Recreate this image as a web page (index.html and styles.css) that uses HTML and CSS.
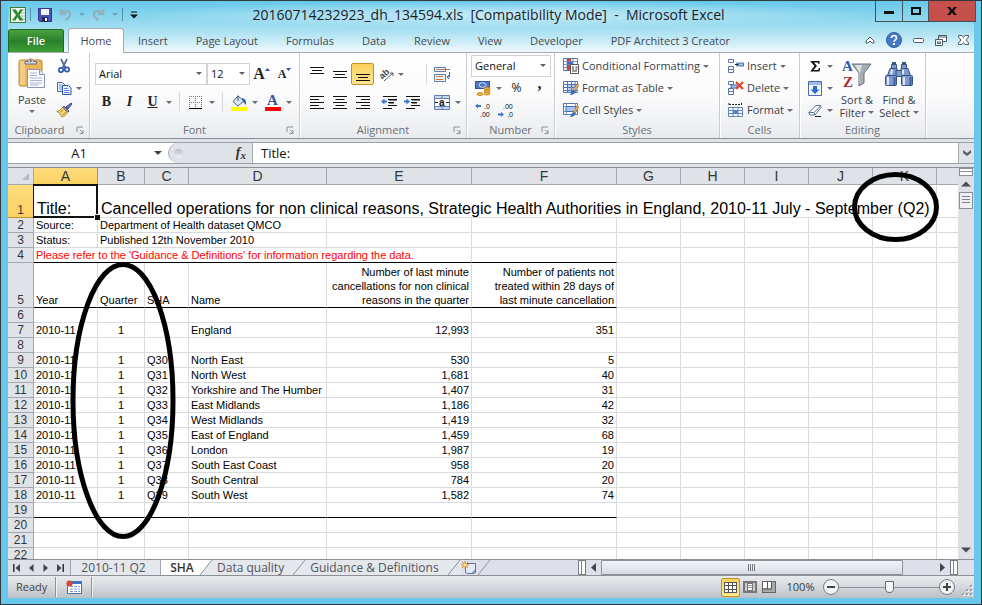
FILE: index.html
```html
<!DOCTYPE html>
<html lang="en">
<head>
<meta charset="utf-8">
<title>20160714232923_dh_134594.xls - Microsoft Excel</title>
<link rel="stylesheet" href="styles.css">
</head>
<body>
<div class="window">
  <header class="titlebar">
    <div class="quick">
      <svg class="ico" width="16" height="16" viewBox="0 0 16 16"><rect x=".5" y=".5" width="15" height="15" fill="#f4faf2" stroke="#3c7d3c"/><path d="M11 3h4M11 6h4M11 9h4M11 12h4" stroke="#8fb98f"/><path d="M2 2.5h4l2 3.5 2-3.5h3L9.500 8l4 5.500h-4L7.500 10l-2 3.500H2L6 8z" fill="#2e8b33"/></svg>
      <span class="qsep"></span>
      <button class="plain" aria-label="Save"><svg width="14" height="14" viewBox="0 0 14 14"><path d="M.5.5h13v13h-12l-1-1z" fill="#4a50b8" stroke="#33368c"/><rect x="3" y="1" width="8" height="6" fill="#eef4ff"/><rect x="4" y="9" width="6" height="5" fill="#222a55"/><rect x="7" y="10" width="2" height="3" fill="#fff"/></svg></button>
      <button class="plain" aria-label="Undo"><svg width="13" height="13" viewBox="0 0 13 13"><path d="M2 1v5h5M2.500 5.500C5 2 11 2 11 6.500 11 9 9 10.500 6.500 12" fill="none" stroke="#93b1c1" stroke-width="2.500"/></svg></button>
      <i class="caret dim"></i>
      <button class="plain" aria-label="Redo"><svg width="13" height="13" viewBox="0 0 13 13"><path d="M11 1v5H6M10.500 5.500C8 2 2 2 2 6.500 2 9 4 10.500 6.500 12" fill="none" stroke="#93b1c1" stroke-width="2.500"/></svg></button>
      <i class="caret dim"></i>
      <span class="qsep"></span>
      <svg width="8" height="8" viewBox="0 0 8 8"><path d="M1 1h6" stroke="#111"/><path d="M0 3.500h8L4 7.500z" fill="#111"/></svg>
    </div>
    <h1>20160714232923_dh_134594.xls&nbsp; [Compatibility Mode]&nbsp; -&nbsp; Microsoft Excel</h1>
    <div class="winbtns">
      <button class="wmin" aria-label="Minimize"><svg width="10" height="10"><rect y="5" width="10" height="3" fill="#111"/></svg></button>
      <button class="wmax" aria-label="Maximize"><svg width="10" height="10"><rect x="1" y="2" width="8" height="6" fill="none" stroke="#111" stroke-width="2"/></svg></button>
      <button class="wclose" aria-label="Close"><svg width="10" height="8" viewBox="0 0 10 8"><path d="M0 0h3l2 2.500L7 0h3L6.700 4 10 8H7L5 5.500 3 8H0l3.300-4z" fill="#111"/></svg></button>
    </div>
  </header>

  <nav class="tabs">
    <button class="file">File</button>
    <button class="tab on">Home</button>
    <button class="tab">Insert</button>
    <button class="tab">Page Layout</button>
    <button class="tab">Formulas</button>
    <button class="tab">Data</button>
    <button class="tab">Review</button>
    <button class="tab">View</button>
    <button class="tab">Developer</button>
    <button class="tab">PDF Architect 3 Creator</button>
    <div class="docbtns">
      <button class="plain" aria-label="Minimize ribbon"><svg width="10" height="8" viewBox="0 0 10 8"><path d="M1 5l4-4 4 4v2H7L5 5 3 7H1z" fill="#fff" stroke="#4a5a66"/></svg></button>
      <button class="plain" aria-label="Help"><svg width="16" height="16" viewBox="0 0 16 16"><circle cx="8" cy="8" r="7.500" fill="#4477c4" stroke="#2f5ca6"/><path d="M5.500 6c0-3.300 5-3.300 5 0 0 1.800-2.500 1.800-2.500 3.800" fill="none" stroke="#fff" stroke-width="1.600"/><rect x="7" y="11" width="2" height="2" fill="#fff"/></svg></button>
      <button class="plain" aria-label="Minimize workbook"><svg width="11" height="5"><rect x=".5" y=".5" width="10" height="4" rx="1" fill="#fff" stroke="#4a5a66"/></svg></button>
      <button class="plain" aria-label="Restore workbook"><svg width="12" height="11" viewBox="0 0 12 11"><path d="M3.500.5h8v6h-8z" fill="#fff" stroke="#4a5a66"/><path d="M3.500 2h8" stroke="#4a5a66"/><path d="M.5 4.500h7v6h-7z" fill="#fff" stroke="#4a5a66"/><path d="M2.500 7h3v1.500h-3z" fill="#fff" stroke="#4a5a66"/></svg></button>
      <button class="plain" aria-label="Close workbook"><svg width="11" height="10" viewBox="0 0 11 10"><path d="M.5.5H4L5.500 2.500 7 .5h3.500V2L8 5l2.500 3v1.500H7L5.500 7.500 4 9.500H.5V8L3 5 .5 2z" fill="#fff" stroke="#4a5a66"/></svg></button>
    </div>
  </nav>

  <section class="ribbon">
    <div class="group g-clip">
      <div class="body">
        <button class="big paste"><svg width="28" height="31" viewBox="0 0 28 31"><rect x="1" y="2" width="23" height="26" rx="2" fill="#e9b55b" stroke="#c48a2e"/><path d="M2 3h5v24H2z" fill="#f3cd85"/><path d="M7 6V3.500h3C10 .2 15.500.2 15.500 3.500h3V6z" fill="#d3d7dd" stroke="#6d737b"/><circle cx="12.700" cy="3" r="1" fill="#555"/><path d="M9.500 11.500h12l5 5v13h-17z" fill="#fdfdff" stroke="#8694b5"/><path d="M21.500 11.500v5h5" fill="#dfe6f3" stroke="#8694b5"/><path d="M12 15h7M12 17.500h7M12 20h12M12 22.500h12M12 25h12M12 27h9" stroke="#a4b2d2"/></svg><span>Paste</span><i class="caret"></i></button>
        <div class="stack">
          <button class="row" aria-label="Cut"><svg width="16" height="16" viewBox="0 0 16 16"><path d="M5 1l4.500 9M11 1L6.500 10" stroke="#52698a" stroke-width="1.700"/><circle cx="5" cy="12" r="2.200" fill="none" stroke="#2d56b0" stroke-width="1.700"/><circle cx="11" cy="11.500" r="2.200" fill="none" stroke="#2d56b0" stroke-width="1.700"/></svg></button>
          <button class="row" aria-label="Copy"><svg width="16" height="16" viewBox="0 0 16 16"><path d="M1.500 2.500h5l2 2v7h-7z" fill="#eaf1fd" stroke="#3d66b5"/><path d="M3 5h3M3 7h4M3 9h4" stroke="#6f93d6"/><path d="M6.500 5.500h6l2.500 2.500v6.500H6.500z" fill="#eaf1fd" stroke="#2c56aa"/><path d="M8 8.500h4M8 10.500h5.500M8 12.500h5.500" stroke="#5c84cf"/></svg><i class="caret"></i></button>
          <button class="row" aria-label="Format Painter"><svg width="17" height="16" viewBox="0 0 17 16"><path d="M15 1l1 1-4 5-2-2z" fill="#6875b8" stroke="#3f4a8a"/><path d="M8 4l5 5-1.500 1.500-5-5z" fill="#8e84ad" stroke="#5e5680"/><path d="M6.500 5.500l5 5C10 13 8 14.500 6 15 4.500 12.500 3 10.500.8 9.500 3 9 5 7.500 6.500 5.500z" fill="#f1d678" stroke="#a8832c"/><path d="M7 13l2.500-3M4 10.500l3-2.500" stroke="#b48d30"/></svg></button>
        </div>
      </div>
      <div class="label">Clipboard<svg class="launch" width="8" height="8"><path d="M1 6V1h6M4 4l3 3M7 4v3.500H3.500" fill="none" stroke="#8b9199"/></svg></div>
    </div>

    <div class="group g-font">
      <div class="body two">
        <div class="line">
          <span class="combo fname"><select aria-label="Font"><option>Arial</option></select></span>
          <span class="combo fsize"><select aria-label="Font size"><option>12</option></select></span>
          <button class="cell serif grow" aria-label="Grow font"><b>A</b><svg width="5" height="3"><path d="M0 3L2.500 0 5 3z" fill="#2b55b5"/></svg></button>
          <button class="cell serif shrink" aria-label="Shrink font"><b>A</b><svg width="5" height="3"><path d="M0 0L2.500 3 5 0z" fill="#2b55b5"/></svg></button>
        </div>
        <div class="line">
          <button class="cell serif"><b>B</b></button>
          <button class="cell serif"><b><em>I</em></b></button>
          <button class="cell serif"><b><u>U</u></b></button>
          <i class="caret wide"></i><span class="vsep"></span>
          <button class="cell" aria-label="Borders"><svg width="13" height="13"><path d="M0 .5h13M0 6.500h13M.5 0v12M6.500 0v12M12.500 0v12" stroke="#777" stroke-dasharray="1 1"/><path d="M0 12.500h13" stroke="#000"/></svg></button>
          <i class="caret wide"></i><span class="vsep"></span>
          <button class="cell" aria-label="Fill color"><svg width="16" height="17" viewBox="0 0 16 17"><path d="M7 2l6 5-6 5-5-4.500z" fill="#dce6f5" stroke="#4a648c"/><path d="M7 7V1.500" stroke="#3a4f74"/><path d="M11 4c3 .5 4.500 2.500 4 7-1.500-1-2-3-3.500-4z" fill="#2d61b8"/><rect y="13" width="16" height="4" fill="#ff0"/></svg></button>
          <i class="caret wide"></i>
          <button class="cell fcolor serif" aria-label="Font color"><b>A</b></button>
          <i class="caret wide"></i>
        </div>
      </div>
      <div class="label">Font<svg class="launch" width="8" height="8"><path d="M1 6V1h6M4 4l3 3M7 4v3.500H3.500" fill="none" stroke="#8b9199"/></svg></div>
    </div>

    <div class="group g-align">
      <div class="body two">
        <div class="line">
          <button class="cell" aria-label="Top align"><svg width="14" height="14"><path d="M0 .5h14M2 3.500h10M0 6.500h14" stroke="#111"/></svg></button>
          <button class="cell" aria-label="Middle align"><svg width="14" height="14"><path d="M0 4.500h14M2 7.500h10M0 10.500h14" stroke="#111"/></svg></button>
          <button class="cell pressed" aria-label="Bottom align"><svg width="14" height="14"><path d="M0 7.500h14M2 10.500h10M0 13.500h14" stroke="#111"/></svg></button>
          <button class="cell orient" aria-label="Orientation"><svg width="17" height="16" viewBox="0 0 17 16"><text x="2" y="12" transform="rotate(-40 5 10)" font-family="Liberation Sans" font-size="9" font-weight="bold" fill="#444">ab</text><path d="M6 15L15 7M12 7h3v3" stroke="#555" fill="none"/></svg></button>
          <i class="caret wide"></i><span class="vsep far"></span>
          <button class="cell" aria-label="Wrap text"><svg width="16" height="15" viewBox="0 0 16 15"><path d="M.5.500h11v4H.5zM.5 7.500h11v7H.5z" fill="#eef3fb" stroke="#5f7dae"/><path d="M2 2.500h14" stroke="#c0764a"/><path d="M2 9.500h7M2 12.500h7" stroke="#c0764a"/><path d="M15.500 5v5H13M15 8l-2 2 2 2" fill="none" stroke="#3e6ab8"/></svg></button>
        </div>
        <div class="line">
          <button class="cell" aria-label="Align left"><svg width="14" height="13"><path d="M0 .5h14M0 3.500h9M0 6.500h14M0 9.500h9M0 12.500h14" stroke="#111"/></svg></button>
          <button class="cell" aria-label="Center"><svg width="14" height="13"><path d="M0 .5h14M2.500 3.500h9M0 6.500h14M2.500 9.500h9M0 12.500h14" stroke="#111"/></svg></button>
          <button class="cell" aria-label="Align right"><svg width="14" height="13"><path d="M0 .5h14M5 3.500h9M0 6.500h14M5 9.500h9M0 12.500h14" stroke="#111"/></svg></button>
          <button class="cell indent" aria-label="Decrease indent"><svg width="16" height="13" viewBox="0 0 16 13"><path d="M2 .5h14M7 3.500h9M7 6.500h6M7 9.500h9M2 12.500h9" stroke="#111"/><path d="M8 3h8v1.500H8zM8 6h5v1.500H8z" fill="#111"/><path d="M0 5.500L3.500 2.500v2H6v2H3.500v2z" fill="#3a73d0"/></svg></button>
          <button class="cell" aria-label="Increase indent"><svg width="16" height="13" viewBox="0 0 16 13"><path d="M2 .5h14M7 3.500h9M7 6.500h6M7 9.500h9M2 12.500h9" stroke="#111"/><path d="M8 3h8v1.500H8zM8 6h5v1.500H8z" fill="#111"/><path d="M6 5.500L2.500 2.500v2H0v2h2.500v2z" fill="#3a73d0"/></svg></button>
          <button class="cell merge" aria-label="Merge and center"><svg width="16" height="15" viewBox="0 0 16 15"><path d="M.5.500h15v14H.5z" fill="#c9d9f2" stroke="#5f7dae"/><path d="M0 3.500h16M0 11.500h16M8 0v3M8 12v3" stroke="#5f7dae"/><rect x="1" y="4" width="14" height="7" fill="#fff"/><path d="M1 7.500h3M12 7.500h3" stroke="#222"/><text x="5" y="10.500" font-family="Liberation Sans" font-size="10" font-weight="bold" fill="#111">a</text></svg></button>
          <i class="caret wide"></i>
        </div>
      </div>
      <div class="label">Alignment<svg class="launch" width="8" height="8"><path d="M1 6V1h6M4 4l3 3M7 4v3.500H3.500" fill="none" stroke="#8b9199"/></svg></div>
    </div>

    <div class="group g-num">
      <div class="body stack">
        <span class="combo"><select aria-label="Number format"><option>General</option></select></span>
        <div class="line">
          <button class="cell" aria-label="Accounting format"><svg width="16" height="15" viewBox="0 0 16 15"><rect x=".5" y=".500" width="14" height="7" fill="#4e78c0" stroke="#2f5596"/><ellipse cx="7.500" cy="4" rx="3.500" ry="2.300" fill="none" stroke="#cfe0fa"/><g fill="#f0b93a" stroke="#a9701a" stroke-width=".7"><ellipse cx="12" cy="7.500" rx="3" ry="1.500"/><ellipse cx="12" cy="10" rx="3" ry="1.500"/><ellipse cx="12" cy="12.500" rx="3" ry="1.500"/><ellipse cx="5" cy="13" rx="3" ry="1.500"/></g></svg></button>
          <i class="caret wide"></i>
          <button class="cell pct">%</button>
          <button class="cell serif comma" aria-label="Comma style"><b>,</b></button>
        </div>
        <div class="line">
          <button class="cell" aria-label="Increase decimal"><svg width="16" height="16" viewBox="0 0 16 16"><path d="M0 4L3 1.500V3h3v2H3v1.500z" fill="#3a73d0"/><g font-family="Liberation Sans" font-size="7" fill="#111"><text x="9" y="7">.0</text><text x="5" y="15">.00</text></g></svg></button>
          <button class="cell" aria-label="Decrease decimal"><svg width="16" height="16" viewBox="0 0 16 16"><path d="M6 12.500L3 10v1.500H0v2h3V15z" fill="#3a73d0"/><g font-family="Liberation Sans" font-size="7" fill="#111"><text x="5" y="7">.00</text><text x="9" y="15">.0</text></g></svg></button>
        </div>
      </div>
      <div class="label">Number<svg class="launch" width="8" height="8"><path d="M1 6V1h6M4 4l3 3M7 4v3.500H3.500" fill="none" stroke="#8b9199"/></svg></div>
    </div>

    <div class="group g-style">
      <div class="body stack">
        <button class="row"><svg width="16" height="16" viewBox="0 0 16 16"><path d="M.5.500h14v12H.5z" fill="#fff" stroke="#5577ae"/><path d="M1 3.500h13M1 6.500h13M1 9.500h13M4 1v11M10 1v11" stroke="#7b98c6"/><rect x="4" y="1" width="4" height="2.500" fill="#d9412f"/><rect x="4" y="4" width="6" height="2.500" fill="#3c6cc4"/><rect x="4" y="7" width="3" height="5" fill="#d9412f"/><path d="M7.500 6.500h8v9h-8z" fill="#fff" stroke="#555"/><path d="M9 9h2M12.500 9h2M9 11h2M12.500 11h2M9 13h5" stroke="#333"/></svg><span>Conditional Formatting</span><i class="caret"></i></button>
        <button class="row"><svg width="16" height="16" viewBox="0 0 16 16"><path d="M.5 1.500h14v11H.5z" fill="#fff" stroke="#5577ae"/><path d="M4 4h11v8H4z" fill="#b9cff0"/><path d="M1 4.500h14M1 7.500h14M1 10.500h14M4.500 1v12M8.500 1v12M12 1v12" stroke="#4f75b6"/><path d="M14 4l2 1-4 6-2-1z" fill="#e7b765" stroke="#936520" stroke-width=".6"/><path d="M10 10l2.500 1.500C12 14 9 15.500 6.500 15c2-.8 2-3.500 3.500-5z" fill="#3268c6"/></svg><span>Format as Table</span><i class="caret"></i></button>
        <button class="row"><svg width="16" height="16" viewBox="0 0 16 16"><path d="M.5 1.500h14v11H.5z" fill="#fff" stroke="#5577ae"/><path d="M1 4.500h14M1 9.500h14M3.500 1v12M12.500 1v12" stroke="#7b98c6"/><path d="M3 4.500h10v5H3z" fill="#a9c8f3" stroke="#3d6dbb"/><path d="M14 4l2 1-4 6-2-1z" fill="#e7b765" stroke="#936520" stroke-width=".6"/><path d="M10 10l2.500 1.500C12 14 9 15.500 6.500 15c2-.8 2-3.500 3.500-5z" fill="#3268c6"/></svg><span>Cell Styles</span><i class="caret"></i></button>
      </div>
      <div class="label">Styles</div>
    </div>

    <div class="group g-cells">
      <div class="body stack">
        <button class="row"><svg width="16" height="15" viewBox="0 0 16 15"><path d="M.5.500h5v3h-5zM.5 7.500h5v3h-5zM.5 10.500h5v3h-5z" fill="#fff" stroke="#5a76a6"/><path d="M7 5.500h4M9 3.500v4" stroke="#222"/><path d="M10.500 4h5v3h-5z" fill="#a9c8f3" stroke="#3d6dbb"/></svg><span>Insert</span><i class="caret"></i></button>
        <button class="row"><svg width="16" height="15" viewBox="0 0 16 15"><path d="M.5.500h5v3h-5zM.5 7.500h5v3h-5zM.5 10.500h5v3h-5z" fill="#fff" stroke="#5a76a6"/><path d="M3 4h6v3H3z" fill="#a9c8f3" stroke="#3d6dbb"/><path d="M8 1l7 7M15 1L8 8" stroke="#e4472b" stroke-width="2.200"/></svg><span>Delete</span><i class="caret"></i></button>
        <button class="row"><svg width="16" height="16" viewBox="0 0 16 16"><path d="M1 1v3M1 2.500h12M13.500 1v3" stroke="#222" stroke-dasharray="2 1"/><path d="M.5 5.500h14v9H.5z" fill="#fff" stroke="#6484ba"/><path d="M1 8.500h13M1 11.500h13M5 6v9M10 6v9" stroke="#6484ba"/><rect x="5" y="8" width="5" height="4" fill="#4f83dc"/></svg><span>Format</span><i class="caret"></i></button>
      </div>
      <div class="label">Cells</div>
    </div>

    <div class="group g-edit">
      <div class="body">
        <div class="stack">
          <button class="row" aria-label="AutoSum"><svg width="14" height="14" viewBox="0 0 14 14"><path d="M2.500 2h9v3h-1L10 3.500H6L9 7l-3.500 4H10l1-2h1l-.5 3.500h-9V12l4-5-4-4.500z" fill="#111"/></svg><i class="caret"></i></button>
          <button class="row" aria-label="Fill"><svg width="14" height="15" viewBox="0 0 14 15"><path d="M.5.500h13v14H.5z" fill="#f4f8ff" stroke="#4a6cab"/><rect x="1" y="1" width="12" height="3" fill="#9fbce8"/><path d="M5 5h4v3.500h2.500L7 13 2.500 8.500H5z" fill="#2f6ad0"/></svg><i class="caret"></i></button>
          <button class="row" aria-label="Clear"><svg width="14" height="13" viewBox="0 0 14 13"><path d="M8 1.500h4.500l.5 2L7 11H2L.8 8.500z" fill="#f7f9fd" stroke="#5e7296"/><path d="M.8 8.500H6l6.500-6.500M6 8.500L7 11" fill="none" stroke="#5e7296"/><path d="M7 12.500h6" stroke="#222"/></svg><i class="caret"></i></button>
        </div>
        <button class="big edit"><svg width="30" height="30" viewBox="0 0 30 30"><path d="M10 5h19l-7 9v10l-5 3V14z" fill="#a8adb3" stroke="#6b7178"/><path d="M13 6h7l-2 8v10l-.5.500V14z" fill="#dde0e3"/><g font-family="Liberation Serif" font-weight="bold" font-size="15"><text x="0" y="12" fill="#2f5db0">A</text><text x="1" y="28" fill="#a52a2a">Z</text></g></svg><span>Sort &amp;</span><span>Filter <i class="caret"></i></span></button>
        <button class="big edit"><svg width="28" height="28" viewBox="0 0 28 28"><g fill="#7f9bcb" stroke="#34528c"><path d="M6.500 4.500h5v4h-5zM16.500 4.500h5v4h-5z"/><path d="M5 8.500h7l1 7H2.500zM16 8.500h7l2.500 7H15z"/><path d="M11 10.500h6v6h-6z"/><rect x=".500" y="15.500" width="11" height="10" rx="1"/><rect x="16.500" y="15.500" width="11" height="10" rx="1"/></g><path d="M3 17v8M19 17v8M7 9.500l-1 5M18 9.500v5" stroke="#dce8fa" stroke-width="2"/><path d="M9.500 17v8M25.500 17v8" stroke="#3f5f9e" stroke-width="2"/><path d="M7 3h4M17 3h4" stroke="#34528c" stroke-width="2"/></svg><span>Find &amp;</span><span>Select <i class="caret"></i></span></button>
      </div>
      <div class="label">Editing</div>
    </div>
  </section>

  <section class="fbar">
    <input class="namebox" aria-label="Name box" value="A1">
    <i class="caret dark"></i>
    <div class="fx"><span class="knob"></span><button class="plain fxb"><em>f</em><small>x</small></button></div>
    <input class="formula" aria-label="Formula" value="Title:">
    <button class="expand" aria-label="Expand formula bar"><svg width="8" height="6"><path d="M0 0l4 3 4-3v3L4 6 0 3z" fill="#5a6068"/></svg></button>
  </section>

  <main class="sheet">
    <div class="grid">
      <table>
        <colgroup><col class="cr"><col class="cn"><col class="cb"><col class="cc"><col class="cd"><col class="ce"><col class="ce"><col class="cn"><col class="cn"><col class="cn"><col class="cn"><col class="cn"><col></colgroup>
        <thead><tr><th class="corner"><svg width="7" height="7"><path d="M7 0v7H0z" fill="#b5bac1"/></svg></th><th class="sel">A</th><th>B</th><th>C</th><th>D</th><th>E</th><th>F</th><th>G</th><th>H</th><th>I</th><th>J</th><th>K</th><th></th></tr></thead>
        <tbody>
        <tr class="r1"><th class="sel">1</th><td class="cur">Title:</td><td colspan="10">Cancelled operations for non clinical reasons, Strategic Health Authorities in England, 2010-11 July - September (Q2)</td><td></td></tr>
        <tr><th>2</th><td>Source:</td><td colspan="3">Department of Health dataset QMCO</td><td></td><td></td><td></td><td></td><td></td><td></td><td></td><td></td></tr>
        <tr><th>3</th><td>Status:</td><td colspan="3">Published 12th November 2010</td><td></td><td></td><td></td><td></td><td></td><td></td><td></td><td></td></tr>
        <tr><th>4</th><td colspan="5" class="red k">Please refer to the 'Guidance &amp; Definitions' for information regarding the data.</td><td class="k"></td><td></td><td></td><td></td><td></td><td></td><td></td></tr>
        <tr class="r5"><th>5</th><td class="k">Year</td><td class="k">Quarter</td><td class="k">SHA</td><td class="k">Name</td><td class="k n">Number of last minute cancellations for non clinical reasons in the quarter</td><td class="k n">Number of patients not treated within 28 days of last minute cancellation</td><td></td><td></td><td></td><td></td><td></td><td></td></tr>
        <tr><th>6</th><td></td><td></td><td></td><td></td><td></td><td></td><td></td><td></td><td></td><td></td><td></td><td></td></tr>
        <tr><th>7</th><td>2010-11</td><td class="c">1</td><td></td><td>England</td><td class="n">12,993</td><td class="n">351</td><td></td><td></td><td></td><td></td><td></td><td></td></tr>
        <tr><th>8</th><td></td><td></td><td></td><td></td><td></td><td></td><td></td><td></td><td></td><td></td><td></td><td></td></tr>
        <tr><th>9</th><td>2010-11</td><td class="c">1</td><td>Q30</td><td>North East</td><td class="n">530</td><td class="n">5</td><td></td><td></td><td></td><td></td><td></td><td></td></tr>
        <tr><th>10</th><td>2010-11</td><td class="c">1</td><td>Q31</td><td>North West</td><td class="n">1,681</td><td class="n">40</td><td></td><td></td><td></td><td></td><td></td><td></td></tr>
        <tr><th>11</th><td>2010-11</td><td class="c">1</td><td>Q32</td><td>Yorkshire and The Humber</td><td class="n">1,407</td><td class="n">31</td><td></td><td></td><td></td><td></td><td></td><td></td></tr>
        <tr><th>12</th><td>2010-11</td><td class="c">1</td><td>Q33</td><td>East Midlands</td><td class="n">1,186</td><td class="n">42</td><td></td><td></td><td></td><td></td><td></td><td></td></tr>
        <tr><th>13</th><td>2010-11</td><td class="c">1</td><td>Q34</td><td>West Midlands</td><td class="n">1,419</td><td class="n">32</td><td></td><td></td><td></td><td></td><td></td><td></td></tr>
        <tr><th>14</th><td>2010-11</td><td class="c">1</td><td>Q35</td><td>East of England</td><td class="n">1,459</td><td class="n">68</td><td></td><td></td><td></td><td></td><td></td><td></td></tr>
        <tr><th>15</th><td>2010-11</td><td class="c">1</td><td>Q36</td><td>London</td><td class="n">1,987</td><td class="n">19</td><td></td><td></td><td></td><td></td><td></td><td></td></tr>
        <tr><th>16</th><td>2010-11</td><td class="c">1</td><td>Q37</td><td>South East Coast</td><td class="n">958</td><td class="n">20</td><td></td><td></td><td></td><td></td><td></td><td></td></tr>
        <tr><th>17</th><td>2010-11</td><td class="c">1</td><td>Q38</td><td>South Central</td><td class="n">784</td><td class="n">20</td><td></td><td></td><td></td><td></td><td></td><td></td></tr>
        <tr><th>18</th><td>2010-11</td><td class="c">1</td><td>Q39</td><td>South West</td><td class="n">1,582</td><td class="n">74</td><td></td><td></td><td></td><td></td><td></td><td></td></tr>
        <tr><th>19</th><td class="k"></td><td class="k"></td><td class="k"></td><td class="k"></td><td class="k"></td><td class="k"></td><td></td><td></td><td></td><td></td><td></td><td></td></tr>
        <tr><th>20</th><td></td><td></td><td></td><td></td><td></td><td></td><td></td><td></td><td></td><td></td><td></td><td></td></tr>
        <tr><th>21</th><td></td><td></td><td></td><td></td><td></td><td></td><td></td><td></td><td></td><td></td><td></td><td></td></tr>
        <tr><th>22</th><td></td><td></td><td></td><td></td><td></td><td></td><td></td><td></td><td></td><td></td><td></td><td></td></tr>
        </tbody>
      </table>
      <svg class="marks" width="950" height="391" viewBox="0 0 950 391" fill="none" stroke="#000" stroke-width="5"><ellipse cx="115" cy="232.500" rx="50" ry="136"/><ellipse cx="887.500" cy="39" rx="41" ry="32.500"/></svg>
    </div>
    <div class="vscroll">
      <span class="vsplit"></span>
      <svg width="10" height="6"><path d="M0 5.500L5 .5l5 5z" fill="#4a4d52"/></svg>
      <span class="vthumb"></span>
      <svg class="down" width="10" height="6"><path d="M0 .5l5 5 5-5z" fill="#4a4d52"/></svg>
    </div>
  </main>

  <div class="bottom">
    <div class="nav">
      <button class="plain" aria-label="First sheet"><svg width="7" height="8"><path d="M.75 0v8" stroke="#333" stroke-width="1.500"/><path d="M7 0v8L2.500 4z" fill="#444"/></svg></button>
      <button class="plain" aria-label="Previous sheet"><svg width="5" height="8"><path d="M4.500 0v8L0 4z" fill="#444"/></svg></button>
      <button class="plain" aria-label="Next sheet"><svg width="5" height="8"><path d="M.5 0v8L5 4z" fill="#444"/></svg></button>
      <button class="plain" aria-label="Last sheet"><svg width="7" height="8"><path d="M6.250 0v8" stroke="#333" stroke-width="1.500"/><path d="M0 0v8l4.500-4z" fill="#444"/></svg></button>
    </div>
    <button class="st first">2010-11 Q2</button>
    <button class="st active">SHA</button>
    <svg class="slant white" width="14" height="15"><path d="M0 0h13L1 15H0z" fill="#fff"/><path d="M13 0L1 15" stroke="#8b9097"/></svg>
    <button class="st">Data quality</button>
    <svg class="slant" width="14" height="15"><path d="M13 0L1 15" stroke="#8b9097"/></svg>
    <button class="st">Guidance &amp; Definitions</button>
    <svg class="slant" width="14" height="15"><path d="M13 0L1 15" stroke="#8b9097"/></svg>
    <button class="plain newsheet" aria-label="Insert worksheet"><svg width="16" height="13" viewBox="0 0 16 13"><path d="M4.500 2.500h10v9l-2 1h-6l-2-1z" fill="#e3ebf8" stroke="#5d6f93"/><path d="M10 12.500l4-4v3z" fill="#7f95c0"/><path d="M4 0v8M0 4h8M1 1l6 6M7 1L1 7" stroke="#e08a1e"/><circle cx="4" cy="4" r="1.500" fill="#ffe08a"/></svg></button>
    <svg class="slant last" width="14" height="15"><path d="M13 0L1 15" stroke="#8b9097"/></svg>
    <div class="hscroll">
      <span class="hsplit"></span>
      <svg class="ha" width="5" height="9"><path d="M5 0v9L0 4.500z" fill="#444"/></svg>
      <div class="htrack"><span class="hthumb"><svg width="8" height="7"><path d="M.5 0v7M2.500 0v7M4.500 0v7M6.500 0v7" stroke="#777c84"/></svg></span></div>
      <svg class="ha" width="5" height="9"><path d="M0 0v9l5-4.500z" fill="#444"/></svg>
      <span class="hsplit end"></span>
    </div>
  </div>

  <footer class="status">
    <span class="ready">Ready</span>
    <span class="ssep"></span>
    <button class="plain macro" aria-label="Record macro"><svg width="16" height="14" viewBox="0 0 16 14"><path d="M1.500 1.500h14v12h-14z" fill="#fff" stroke="#4d6fae"/><rect x="2" y="1" width="13" height="3" fill="#3f70c8"/><path d="M4 6.500h3M8 6.500h3M12 6.500h2M4 9h3M8 9h3M12 9h2M4 11.500h3M8 11.500h3M12 11.500h2" stroke="#7e9ed4"/><circle cx="3.500" cy="3.500" r="3" fill="#d8472e"/></svg></button>
    <span class="ssep"></span>
    <div class="views">
      <button class="view von" aria-label="Normal view"><svg width="13" height="11"><rect x=".5" y=".5" width="12" height="10" fill="#fff" stroke="#555"/><path d="M0 3.500h13M0 7.500h13M4.500 0v11M8.500 0v11" stroke="#555"/></svg></button>
      <button class="view" aria-label="Page layout view"><svg width="14" height="12"><rect x="1" y="1" width="12" height="10" fill="#ccc" stroke="#777" stroke-width="2"/><rect x="4.500" y="2.500" width="5" height="7" fill="#fff" stroke="#777"/><path d="M5 4.500h4M5 6.500h4" stroke="#999"/></svg></button>
      <button class="view" aria-label="Page break view"><svg width="14" height="12"><rect x=".5" y=".5" width="13" height="11" fill="#aaa" stroke="#666"/><path d="M1 1h4v6H1zM6 1h3v6H6z" fill="#fff"/><path d="M5.500 0v8M9.500 0v8H0" fill="none" stroke="#555"/></svg></button>
      <span class="pctv">100%</span>
      <button class="plain" aria-label="Zoom out"><svg width="16" height="16"><circle cx="8" cy="8" r="7.500" fill="#f1f2f4" stroke="#777c84"/><path d="M4 8h8" stroke="#444" stroke-width="2"/></svg></button>
      <input type="range" aria-label="Zoom" min="0" max="100" value="50">
      <button class="plain" aria-label="Zoom in"><svg width="16" height="16"><circle cx="8" cy="8" r="7.500" fill="#f1f2f4" stroke="#777c84"/><path d="M4 8h8M8 4v8" stroke="#444" stroke-width="2"/></svg></button>
      <svg class="grip" width="12" height="12"><path d="M9 1h2v2H9zM9 5h2v2H9zM9 9h2v2H9zM5 5h2v2H5zM5 9h2v2H5zM1 9h2v2H1z" fill="#f6f7f8"/><path d="M8 0h2v2H8zM8 4h2v2H8zM8 8h2v2H8zM4 4h2v2H4zM4 8h2v2H4zM0 8h2v2H0z" fill="#9da2a9"/></svg>
    </div>
  </footer>
</div>
</body>
</html>
```
FILE: styles.css
```css
* { box-sizing: border-box; }
body { margin: 0; font: 11px/14px "Open Sans", "Noto Sans", sans-serif; color: #3b3f45; }
button, input, select { font: inherit; color: inherit; margin: 0; padding: 0; border: 0; background: none; border-radius: 0; }
svg { display: block; flex: none; }
i, button { flex: none; }

.window {
  display: flex; flex-direction: column; height: 100vh; min-width: 960px;
  border: 1px solid #33373c; padding: 0 7px 6px;
  background: linear-gradient(#66c9e9, #a9e0f2 30px, #f2fafd 52px) 7px 0 / calc(100% - 14px) 52px no-repeat, #66c8ea;
}
.plain { display: flex; align-items: center; justify-content: center; }

.caret { width: 0; height: 0; border: 3px solid transparent; border-top-color: #6a6e74; border-bottom: 0; }
.caret.dim { border-top-color: #6fa2bb; }
.caret.wide { margin: 0 3px 0 2px; }
.caret.dark { border-width: 4px 4px 0; border-top-color: #444; }

/* Title bar */
.titlebar { display: flex; height: 27px; flex: none; }
.quick { display: flex; align-items: center; gap: 7px; width: 130px; padding-left: 2px; }
.qsep { width: 1px; height: 13px; margin-left: -3px; background: #5b8da3; }
.titlebar h1 {
  flex: 1; margin: 0; padding-right: 36px; text-align: center; font-size: 14px; line-height: 28px; font-weight: 400; color: #1d2126;
  background: radial-gradient(closest-side, rgba(255,255,255,.55), rgba(255,255,255,0)); white-space: nowrap;
}
.winbtns { display: flex; height: 21px; margin-right: -2px; border: 1px solid #46525a; border-top: 0; }
.winbtns button { display: flex; align-items: center; justify-content: center; width: 27px; border-right: 1px solid #46525a; }
.winbtns .wmax { width: 26px; }
.winbtns .wclose { width: 46px; border-right: 0; background: #c5504b; }

/* Ribbon tabs */
.tabs { display: flex; align-items: flex-end; height: 24px; flex: none; }
.file { width: 56px; height: 23px; border-radius: 3px 3px 0 0; border: 1px solid #1d6a22; border-bottom: 0; color: #fff; font-weight: 600; background: linear-gradient(#4aa33f, #2a7f2c 50%, #3f9f36); }
.tab { height: 24px; padding: 2px 14px 0; color: #454a50; }
.tab.on { position: relative; z-index: 1; width: 56px; padding: 0; margin: 0 0 -1px 4px; height: 25px; border: 1px solid #a7adb4; border-bottom: 0; border-radius: 3px 3px 0 0; background: #fff; }
.docbtns { display: flex; align-items: center; gap: 11px; height: 24px; margin-left: auto; padding-right: 5px; }

/* Ribbon */
.ribbon { display: flex; height: 87px; flex: none; border-top: 1px solid #a7adb4; border-bottom: 1px solid #8b9097; background: linear-gradient(#fff, #fbfbfc 50%, #e8ebee); }
.group { display: flex; flex-direction: column; flex: none; border-right: 1px solid #c8ccd1; box-shadow: 1px 0 #fff; }
.g-clip { width: 82px; } .g-font { width: 210px; } .g-align { width: 167px; } .g-num { width: 88px; }
.g-style { width: 165px; } .g-cells { width: 80px; } .g-edit { width: 126px; }
.body { flex: 1; display: flex; padding-top: 2px; }
.label { display: flex; align-items: center; justify-content: center; position: relative; height: 17px; color: #6b7079; }
.g-clip .label { padding-right: 18px; }
.launch { position: absolute; right: 5px; top: 5px; }
.stack { display: flex; flex-direction: column; }
.row { display: flex; align-items: center; height: 22px; gap: 4px; white-space: nowrap; }
.line { display: flex; align-items: center; height: 22px; }
.two { flex-direction: column; gap: 6px; padding: 10px 0 0 5px; }
.cell { display: flex; align-items: center; justify-content: center; width: 23px; height: 22px; color: #222; }
.serif { font-family: "Liberation Serif", serif; font-size: 14px; }
.vsep { width: 1px; height: 20px; margin: 0 4px; background: #d5d8dc; }
.vsep.far { margin: 0 3px 0 19px; }
.big { display: flex; flex-direction: column; align-items: center; }
.big span { display: flex; align-items: center; gap: 3px; height: 13px; white-space: nowrap; }
.paste { width: 48px; padding-top: 3px; gap: 4px; }
.edit { width: 42px; padding-top: 4px; }
.edit svg { margin-bottom: 4px; height: 30px; }
.g-edit .stack { width: 36px; padding-left: 8px; }
.g-edit .row { gap: 5px; }
.g-style .body, .g-cells .body { padding-left: 8px; }
.g-style .row, .g-cells .row { gap: 3px; }
.g-num .body { padding-left: 4px; }
.combo { position: relative; display: flex; height: 22px; }
.combo select { appearance: none; width: 100%; padding: 0 3px; border: 1px solid #d0d4d9; background: #fff; color: #111; }
.combo::after { content: ""; position: absolute; right: 5px; top: 9px; border: 3px solid transparent; border-top-color: #5d6167; border-bottom: 0; }
.g-num .combo { width: 80px; }
.fname { width: 112px; } .fsize { width: 43px; }
.grow b { font-size: 16px; }
.shrink b { font-size: 12px; }
.grow svg, .shrink svg { align-self: flex-start; margin-top: 5px; }
.pressed { border: 1px solid #c2912e; border-radius: 2px; background: linear-gradient(#fbd15c, #ffe591); }
.fcolor b { width: 16px; height: 17px; border-bottom: 4px solid red; font-size: 15px; line-height: 13px; color: #34589c; }
.orient { width: 19px; margin-left: 3px; }
.indent { margin-left: 3px; }
.merge { margin-left: 7px; }
.pct { font-size: 12px; }
.comma { font-size: 16px; align-items: flex-start; }

/* Formula bar */
.fbar { display: flex; align-items: center; flex: none; height: 28px; border: solid #dfe3e8; border-width: 3px 0; background: #fff; box-shadow: inset 0 1px #9a9fa6, inset 0 -1px #9a9fa6; color: #111; font-size: 13px; }
.namebox { width: 142px; text-align: center; flex: none; }
.fx { display: flex; align-items: center; justify-content: space-between; width: 85px; height: 20px; margin-left: 6px; padding: 0 6px 0 5px; border: 1px solid #a7adb4; border-width: 0 1px; border-radius: 10px 0 0 10px; background: #dfe3e8; }
.fbar .caret { margin-left: 4px; }
.knob { width: 9px; height: 9px; border-radius: 50%; background: linear-gradient(#b8bdc4, #f0f2f4); }
.fxb { font: bold 14px/14px "Liberation Serif", serif; color: #333; }
.fxb small { font-size: 11px; font-style: italic; padding-top: 3px; }
.formula { flex: 1; padding-left: 8px; min-width: 0; }
.expand { display: flex; align-items: center; justify-content: center; width: 16px; height: 20px; border-left: 1px solid #a7adb4; background: #dfe3e8; }

/* Worksheet */
.sheet { flex: 1; min-height: 0; display: flex; border: solid #8b9097; border-width: 1px 0; }
.grid { position: relative; flex: 1; min-width: 0; overflow: hidden; background: #fff; }
table { width: 100%; table-layout: fixed; border-collapse: separate; border-spacing: 0; font: 11px/14px "Liberation Sans", Arial, sans-serif; color: #000; }
.cr { width: 26px; } .cn { width: 64px; } .cb { width: 47px; } .cc { width: 44px; } .cd { width: 138px; } .ce { width: 145px; }
td, th { height: 15px; padding: 0 2px; border: solid #d9dadc; border-width: 0 1px 1px 0; vertical-align: bottom; }
td { white-space: nowrap; }
td:last-child, thead th:last-child { border-right: 0; }
th { padding: 0; font-size: 12px; font-weight: 400; text-align: center; color: #33363b; background: #dfe3e8; border-color: #a3a8af; }
thead th { height: 17px; font-size: 14px; line-height: 16px; }
th.sel { background: linear-gradient(#fbdc7c, #fdd264); border-color: #c2912e; }
.corner svg { margin: 0 4px 4px auto; }
.r1 th, .r1 td { height: 33px; }
.r1 td { font-size: 16px; line-height: 16px; padding-left: 3px; }
.r5 td, .r5 th { height: 45px; }
.r5 td { white-space: normal; }
.r5 .n { padding-left: 4px; }
.k { border-bottom-color: #000; }
.red { color: #f00; }
.n { text-align: right; }
.c { text-align: center; }
.cur { position: relative; }
.cur::before { content: ""; position: absolute; inset: -1px; border: 2px solid #111; border-width: 2px 2px 2px 1px; }
.cur::after { content: ""; position: absolute; right: -3px; bottom: -3px; width: 5px; height: 5px; background: #111; border: solid #fff; border-width: 1px 0 0 1px; }
.marks { position: absolute; left: 0; top: 0; }
.vscroll { display: flex; flex-direction: column; align-items: center; gap: 5px; width: 16px; background: #dde0e6; }
.vsplit { width: 14px; height: 8px; border: 1px solid #8b9097; background: linear-gradient(#fff 2px, #8b9097 2px 3px, #fff 3px); }
.vthumb { width: 14px; height: 17px; border: 1px solid #8b9097; background: repeating-linear-gradient(#7d828a 0 1px, #eef0f3 1px 3px) center / 8px 9px no-repeat, #eef0f3; }
.down { margin: auto 0 6px; }

/* Sheet tabs */
.bottom { display: flex; flex: none; height: 16px; border-bottom: 1px solid #8b9097; background: #dde0e8; font-size: 12px; color: #50555c; }
.nav { display: flex; align-items: center; justify-content: space-between; width: 62px; padding: 0 6px 0 5px; }
.st { height: 15px; line-height: 15px; padding: 0 8px 0 4px; white-space: nowrap; background: #e4e7ec; }
.st.first { width: 91px; border: 1px solid #a3a8af; border-width: 0 1px; }
.st.active { width: 38px; padding: 0 0 0 4px; font-weight: 600; background: #fff; color: #333; }
.slant { background: #e4e7ec; }
.slant.last { background: none; }
.newsheet { width: 16px; }
.hscroll { display: flex; align-items: center; flex: none; width: 396px; margin-left: auto; padding-right: 16px; }
.hsplit { width: 8px; height: 15px; flex: none; border: 1px solid #777c84; background: linear-gradient(90deg, #fff 2px, #777c84 2px 3px, #fff 3px); }
.ha { margin: 0 5px; }
.htrack { flex: 1; height: 15px; padding-right: 32px; }
.hthumb { display: flex; align-items: center; justify-content: center; height: 15px; border: 1px solid #8b9097; border-radius: 1px; background: linear-gradient(#f2f4f8, #d7dbe3); }

/* Status bar */
.status { display: flex; align-items: center; flex: none; height: 22px; background: linear-gradient(#e9ebee, #d5d8dc 50%, #bcc0c6); }
.ready { width: 47px; padding-left: 8px; color: #444; }
.ssep { width: 2px; height: 20px; border-left: 1px solid #8e939a; border-right: 1px solid #f3f4f6; }
.macro { width: 34px; }
.views { display: flex; align-items: center; margin-left: auto; }
.view { display: flex; align-items: center; justify-content: center; width: 19px; height: 19px; }
.von { border: 1px solid #c2912e; border-radius: 2px; background: linear-gradient(#fbd15c, #ffe98f); }
.pctv { width: 45px; text-align: center; }
input[type="range"] { appearance: none; width: 100px; height: 16px; background: linear-gradient(#8b9097, #8b9097) center / 100% 1px no-repeat; }
input[type="range"]::-webkit-slider-thumb { appearance: none; width: 9px; height: 12px; background: #f4f5f7; border: 1px solid #666b72; border-radius: 1px 1px 5px 5px; }
.grip { align-self: flex-end; margin-left: 7px; }
```
